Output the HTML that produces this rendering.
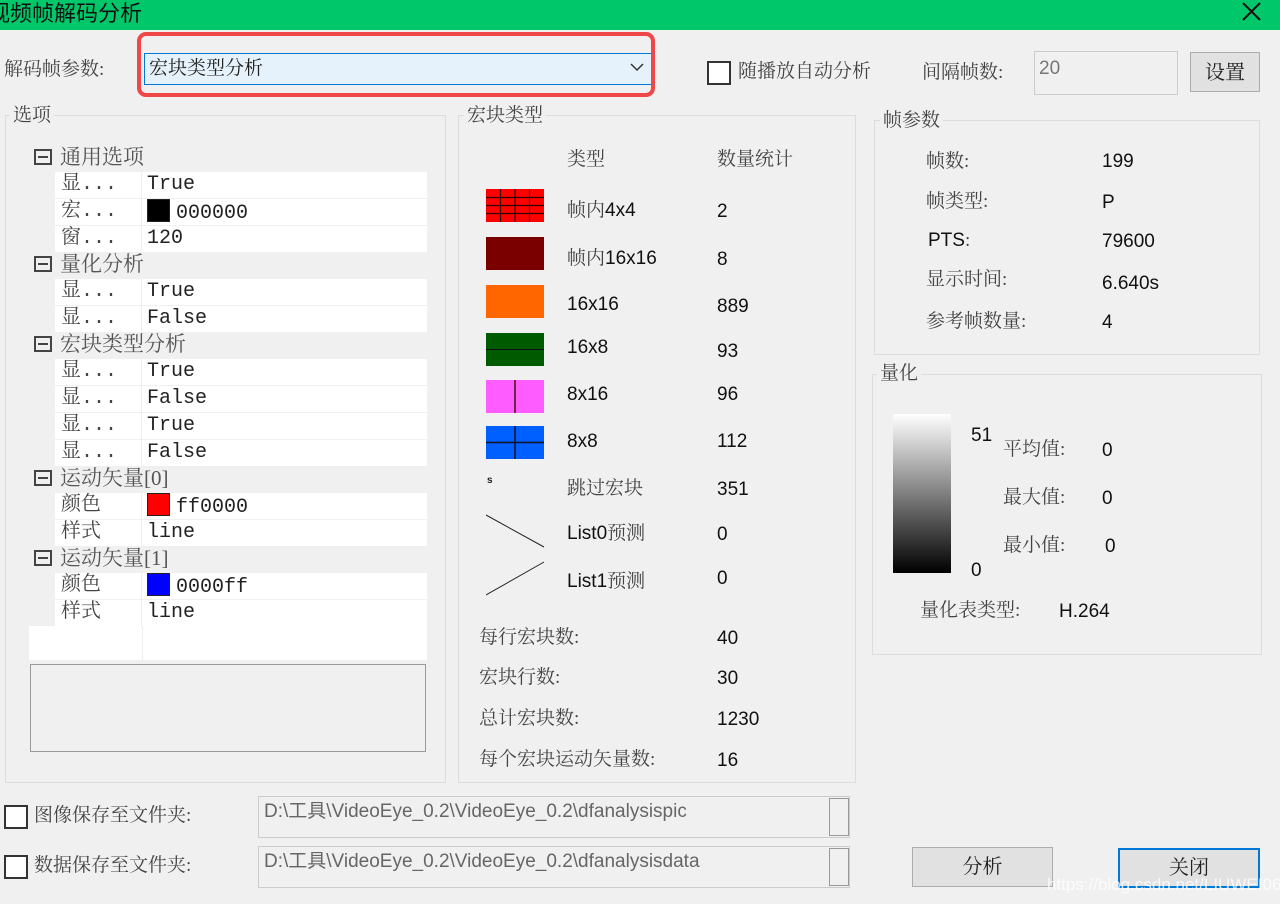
<!DOCTYPE html>
<html><head><meta charset="utf-8"><style>
*{margin:0;padding:0;box-sizing:border-box}
body{width:1280px;height:904px;background:#f0f0f0;position:relative;overflow:hidden;font-family:"Liberation Sans","Noto Sans CJK SC",sans-serif;color:#222}
.a{position:absolute;white-space:nowrap;line-height:26px}
.s{font-family:"Liberation Serif","Noto Serif CJK SC",serif;color:#444}
.n{font-family:"Liberation Sans","Noto Sans CJK SC",sans-serif;color:#111}
.g{position:absolute;border:1px solid #dcdcdc}
.gl{position:absolute;background:#f0f0f0;padding:0 3px;font-size:19px;line-height:24px;font-family:"Liberation Serif","Noto Serif CJK SC",serif;color:#444}
.row{position:absolute;left:55px;width:372px;height:26px;background:#fff;font-family:"Liberation Mono","Noto Serif CJK SC",serif;font-size:20px;color:#222;line-height:26px;white-space:nowrap}
.row span{position:absolute;top:0}
.row .k{left:6px;color:#444}
.row .v{left:92px}
.row:after{content:"";position:absolute;left:86px;top:0;width:1px;height:26px;background:#eee}
.hd{position:absolute;left:34px;width:380px;height:26px;font-family:"Liberation Serif","Noto Serif CJK SC",serif;font-size:21px;color:#555;white-space:nowrap}
.hd i{position:absolute;left:0;top:5px;width:18px;height:16px;border:2px solid #444}
.hd i:after{content:"";position:absolute;left:2px;right:2px;top:5px;height:2px;background:#444}
.hd b{font-weight:normal;position:absolute;left:26px;top:0;line-height:26px;white-space:nowrap}
.sw{display:inline-block;width:23px;height:23px;border:1px solid #222;vertical-align:-4px;margin-right:6px}
.cb{position:absolute;width:24px;height:24px;border:2px solid #333;background:#fff}
.btn{position:absolute;background:#e1e1e1;border:1px solid #adadad;text-align:center;font-family:"Liberation Serif","Noto Serif CJK SC",serif;font-size:20px;color:#222}
</style></head><body>
<div class="a" style="left:0;top:0;width:1280px;height:30px;background:#00c86a"></div>
<div class="a" style="left:-12px;top:-1px;font-size:22px;color:#111;font-family:'Noto Sans CJK SC',sans-serif">视频帧解码分析</div>
<svg class="a" style="left:1240px;top:0" width="24" height="24"><path d="M3 3L20 20M20 3L3 20" stroke="#111" stroke-width="2"/></svg>

<div class="a s" style="left:4px;top:57px;font-size:19px">解码帧参数:</div>
<div class="a" style="left:144px;top:53px;width:508px;height:32px;background:#e5f1fb;border:1px solid #0078d7"></div>
<div class="a s" style="left:149px;top:56px;font-size:19px;color:#222">宏块类型分析</div>
<svg class="a" style="left:630px;top:62px" width="14" height="10"><path d="M1 2L7 8L13 2" stroke="#333" stroke-width="1.5" fill="none"/></svg>
<div class="a" style="left:137px;top:32px;width:518px;height:65px;border:4px solid #f04848;border-radius:9px"></div>

<div class="cb" style="left:707px;top:61px"></div>
<div class="a s" style="left:738px;top:59px;font-size:19px">随播放自动分析</div>
<div class="a s" style="left:922px;top:60px;font-size:19px">间隔帧数:</div>
<div class="a" style="left:1034px;top:51px;width:144px;height:44px;border:1px solid #ccc;background:#f0f0f0"></div>
<div class="a n" style="left:1039px;top:56px;font-size:19px;color:#777">20</div>
<div class="btn" style="left:1190px;top:52px;width:70px;height:40px;line-height:40px">设置</div>

<!-- left group -->
<div class="g" style="left:5px;top:115px;width:441px;height:668px"></div>
<div class="gl" style="left:10px;top:104px">选项</div>
<div class="hd" style="top:144px"><i></i><b>通用选项</b></div>
<div class="row" style="top:172px"><span class="k">显...</span><span class="v">True</span></div>
<div class="row" style="top:199px"><span class="k">宏...</span><span class="v"><i class="sw" style="background:#000"></i>000000</span></div>
<div class="row" style="top:226px"><span class="k">窗...</span><span class="v">120</span></div>
<div class="hd" style="top:251px"><i></i><b>量化分析</b></div>
<div class="row" style="top:279px"><span class="k">显...</span><span class="v">True</span></div>
<div class="row" style="top:306px"><span class="k">显...</span><span class="v">False</span></div>
<div class="hd" style="top:331px"><i></i><b>宏块类型分析</b></div>
<div class="row" style="top:359px"><span class="k">显...</span><span class="v">True</span></div>
<div class="row" style="top:386px"><span class="k">显...</span><span class="v">False</span></div>
<div class="row" style="top:413px"><span class="k">显...</span><span class="v">True</span></div>
<div class="row" style="top:440px"><span class="k">显...</span><span class="v">False</span></div>
<div class="hd" style="top:465px"><i></i><b>运动矢量[0]</b></div>
<div class="row" style="top:493px"><span class="k">颜色</span><span class="v"><i class="sw" style="background:#f00"></i>ff0000</span></div>
<div class="row" style="top:520px"><span class="k">样式</span><span class="v">line</span></div>
<div class="hd" style="top:545px"><i></i><b>运动矢量[1]</b></div>
<div class="row" style="top:573px"><span class="k">颜色</span><span class="v"><i class="sw" style="background:#00f"></i>0000ff</span></div>
<div class="row" style="top:600px"><span class="k">样式</span><span class="v">line</span></div>
<div class="a" style="left:29px;top:626px;width:398px;height:34px;background:#fff"></div>
<div class="a" style="left:142px;top:626px;width:1px;height:34px;background:#eee"></div>
<div class="a" style="left:30px;top:664px;width:396px;height:88px;border:1px solid #999;background:#f0f0f0"></div>

<!-- middle group -->
<div class="g" style="left:458px;top:115px;width:398px;height:668px"></div>
<div class="gl" style="left:464px;top:104px">宏块类型</div>
<div class="a s" style="left:567px;top:147px;font-size:19px">类型</div>
<div class="a s" style="left:717px;top:147px;font-size:19px">数量统计</div>
<svg class="a" style="left:486px;top:189px" width="58" height="276">
<rect x="0" y="0" width="58" height="33" fill="#f00"/>
<path d="M14.5 0V33M29 0V33M43.5 0V33M0 8.5H58M0 16.5H58M0 24.5H58" stroke="#300" stroke-width="1.2"/>
<rect x="0" y="48" width="58" height="33" fill="#7a0000"/>
<rect x="0" y="96" width="58" height="33" fill="#ff6600"/>
<rect x="0" y="144" width="58" height="33" fill="#005a00"/>
<path d="M0 160.5H58" stroke="#111"/>
<rect x="0" y="191" width="58" height="33" fill="#ff5cff"/>
<path d="M29 191V224" stroke="#411" stroke-width="1.5"/>
<rect x="0" y="237" width="58" height="33" fill="#0060ff"/>
<path d="M29 237V270M0 253.5H58" stroke="#112" stroke-width="1.5"/>
</svg>
<div class="a" style="left:487px;top:468px;font-size:10px;font-weight:bold">s</div>
<svg class="a" style="left:486px;top:514px" width="60" height="82"><path d="M0 1L58 33M0 81L58 48" stroke="#222" stroke-width="1"/></svg>
<div class="a" style="left:567px;top:198px;font-size:19px"><span class="s">帧内</span><span class="n">4x4</span></div>
<div class="a" style="left:567px;top:246px;font-size:19px"><span class="s">帧内</span><span class="n">16x16</span></div>
<div class="a n" style="left:567px;top:292px;font-size:19px">16x16</div>
<div class="a n" style="left:567px;top:335px;font-size:19px">16x8</div>
<div class="a n" style="left:567px;top:382px;font-size:19px">8x16</div>
<div class="a n" style="left:567px;top:429px;font-size:19px">8x8</div>
<div class="a s" style="left:567px;top:476px;font-size:19px">跳过宏块</div>
<div class="a" style="left:567px;top:521px;font-size:19px"><span class="n">List0</span><span class="s">预测</span></div>
<div class="a" style="left:567px;top:569px;font-size:19px"><span class="n">List1</span><span class="s">预测</span></div>
<div class="a n" style="left:717px;top:199px;font-size:19px">2</div>
<div class="a n" style="left:717px;top:247px;font-size:19px">8</div>
<div class="a n" style="left:717px;top:294px;font-size:19px">889</div>
<div class="a n" style="left:717px;top:339px;font-size:19px">93</div>
<div class="a n" style="left:717px;top:382px;font-size:19px">96</div>
<div class="a n" style="left:717px;top:429px;font-size:19px">112</div>
<div class="a n" style="left:717px;top:477px;font-size:19px">351</div>
<div class="a n" style="left:717px;top:522px;font-size:19px">0</div>
<div class="a n" style="left:717px;top:566px;font-size:19px">0</div>
<div class="a s" style="left:479px;top:625px;font-size:19px">每行宏块数:</div>
<div class="a s" style="left:479px;top:665px;font-size:19px">宏块行数:</div>
<div class="a s" style="left:479px;top:706px;font-size:19px">总计宏块数:</div>
<div class="a s" style="left:479px;top:747px;font-size:19px">每个宏块运动矢量数:</div>
<div class="a n" style="left:717px;top:626px;font-size:19px">40</div>
<div class="a n" style="left:717px;top:666px;font-size:19px">30</div>
<div class="a n" style="left:717px;top:707px;font-size:19px">1230</div>
<div class="a n" style="left:717px;top:748px;font-size:19px">16</div>

<!-- right groups -->
<div class="g" style="left:874px;top:120px;width:386px;height:235px"></div>
<div class="gl" style="left:880px;top:109px">帧参数</div>
<div class="a s" style="left:926px;top:149px;font-size:19px">帧数:</div>
<div class="a s" style="left:926px;top:189px;font-size:19px">帧类型:</div>
<div class="a" style="left:928px;top:228px;font-size:19px"><span class="n">PTS</span><span class="s">:</span></div>
<div class="a s" style="left:926px;top:267px;font-size:19px">显示时间:</div>
<div class="a s" style="left:926px;top:309px;font-size:19px">参考帧数量:</div>
<div class="a n" style="left:1102px;top:149px;font-size:19px">199</div>
<div class="a n" style="left:1102px;top:190px;font-size:19px">P</div>
<div class="a n" style="left:1102px;top:229px;font-size:19px">79600</div>
<div class="a n" style="left:1102px;top:271px;font-size:19px">6.640s</div>
<div class="a n" style="left:1102px;top:310px;font-size:19px">4</div>

<div class="g" style="left:872px;top:374px;width:390px;height:281px"></div>
<div class="gl" style="left:877px;top:362px">量化</div>
<div class="a" style="left:893px;top:414px;width:58px;height:159px;background:linear-gradient(#fff,#000)"></div>
<div class="a n" style="left:971px;top:423px;font-size:19px">51</div>
<div class="a n" style="left:971px;top:558px;font-size:19px">0</div>
<div class="a s" style="left:1003px;top:437px;font-size:19px">平均值:</div>
<div class="a s" style="left:1003px;top:485px;font-size:19px">最大值:</div>
<div class="a s" style="left:1003px;top:533px;font-size:19px">最小值:</div>
<div class="a n" style="left:1102px;top:438px;font-size:19px">0</div>
<div class="a n" style="left:1102px;top:486px;font-size:19px">0</div>
<div class="a n" style="left:1105px;top:534px;font-size:19px">0</div>
<div class="a s" style="left:920px;top:598px;font-size:19px">量化表类型:</div>
<div class="a n" style="left:1059px;top:599px;font-size:19px">H.264</div>

<!-- bottom -->
<div class="cb" style="left:4px;top:805px"></div>
<div class="a s" style="left:34px;top:803px;font-size:19px">图像保存至文件夹:</div>
<div class="cb" style="left:4px;top:855px"></div>
<div class="a s" style="left:34px;top:853px;font-size:19px">数据保存至文件夹:</div>
<div class="a" style="left:258px;top:796px;width:592px;height:42px;border:1px solid #ccc"></div>
<div class="a" style="left:829px;top:798px;width:20px;height:38px;border:1px solid #999;background:#f0f0f0"></div>
<div class="a n" style="left:264px;top:799px;font-size:19px;color:#666">D:\工具\VideoEye_0.2\VideoEye_0.2\dfanalysispic</div>
<div class="a" style="left:258px;top:846px;width:592px;height:42px;border:1px solid #ccc"></div>
<div class="a" style="left:829px;top:848px;width:20px;height:38px;border:1px solid #999;background:#f0f0f0"></div>
<div class="a n" style="left:264px;top:849px;font-size:19px;color:#666">D:\工具\VideoEye_0.2\VideoEye_0.2\dfanalysisdata</div>
<div class="btn" style="left:912px;top:847px;width:141px;height:40px;line-height:38px">分析</div>
<div class="btn" style="left:1118px;top:848px;width:142px;height:40px;line-height:36px;border:2px solid #0078d7">关闭</div>
<div class="a" style="left:1047px;top:872px;font-size:17px;color:rgba(255,255,255,0.8)">https://blog.csdn.net/LIUWEI0611</div>
</body></html>
